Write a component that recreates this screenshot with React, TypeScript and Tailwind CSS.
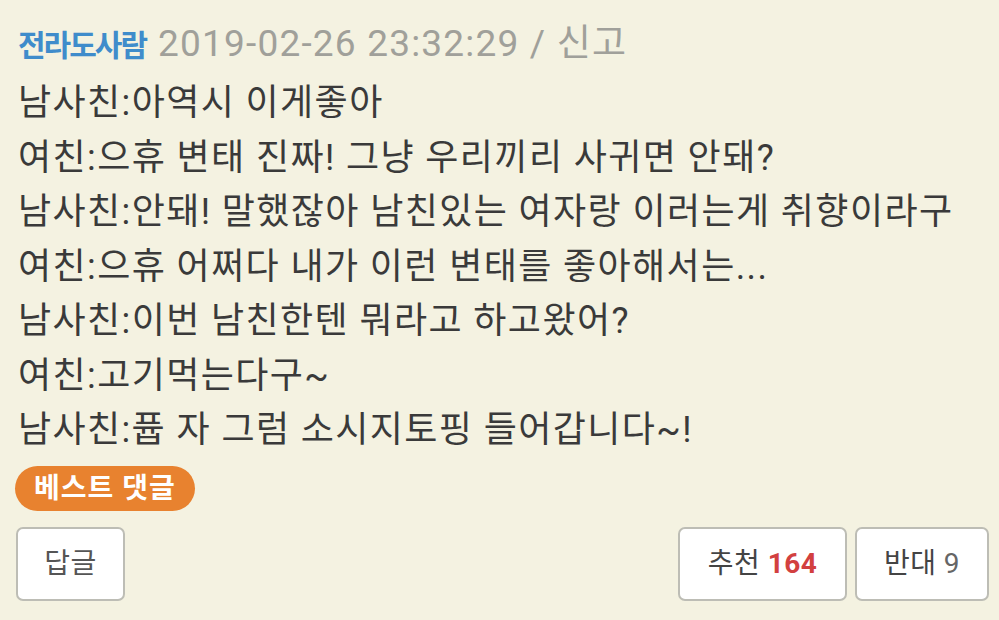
import React from "react";

const lines = [
  "남사친:아역시 이게좋아",
  "여친:으휴 변태 진짜! 그냥 우리끼리 사귀면 안돼?",
  "남사친:안돼! 말했잖아 남친있는 여자랑 이러는게 취향이라구",
  "여친:으휴 어쩌다 내가 이런 변태를 좋아해서는...",
  "남사친:이번 남친한텐 뭐라고 하고왔어?",
  "여친:고기먹는다구~",
  "남사친:퓹 자 그럼 소시지토핑 들어갑니다~!",
];

export default function App() {
  return (
    <div
      className="w-[999px] h-[620px] bg-[#f4f2e1] overflow-hidden pl-[18px] pr-[10px] pt-[22px]"
      style={{ fontFamily: "Roboto, 'Noto Sans CJK KR', sans-serif" }}
    >
      <div className="flex items-baseline h-[44px] leading-[44px] whitespace-nowrap">
        <span className="font-bold text-[#3f8ccb] text-[30px] tracking-[-2px]">전라도사람</span>
        <span className="ml-[12px] text-[#a0a09a] text-[37px] tracking-[1.2px]">2019-02-26 23:32:29 / 신고</span>
      </div>
      <div className="mt-[10px] flex flex-col text-[#3a3a3a] text-[36px] tracking-[1.4px] leading-[54.5px]">
        {lines.map((l, i) => (
          <div key={i} className="whitespace-nowrap">{l}</div>
        ))}
      </div>
      <div className="mt-[8px] flex">
        <span className="-ml-[3px] h-[45px] px-[19px] rounded-full bg-[#e8822f] text-white font-bold text-[28px] tracking-[1px] leading-[45px]">
          베스트 댓글
        </span>
      </div>
      <div className="mt-[16px] flex items-center">
        <button className="-ml-[2px] w-[109px] h-[74px] bg-white border-2 border-[#bdbdb5] rounded-[7px] text-[28px] tracking-[0.5px] text-[#555]">
          답글
        </button>
        <div className="ml-auto flex gap-[8px]">
          <button className="w-[169px] h-[74px] bg-white border-2 border-[#bdbdb5] rounded-[7px] text-[28px] tracking-[0.5px] text-[#444]">
            추천 <span className="font-bold text-[#d2403f]">164</span>
          </button>
          <button className="w-[134px] h-[74px] bg-white border-2 border-[#bdbdb5] rounded-[7px] text-[28px] tracking-[0.5px] text-[#444]">
            반대 <span className="text-[#666]">9</span>
          </button>
        </div>
      </div>
    </div>
  );
}
